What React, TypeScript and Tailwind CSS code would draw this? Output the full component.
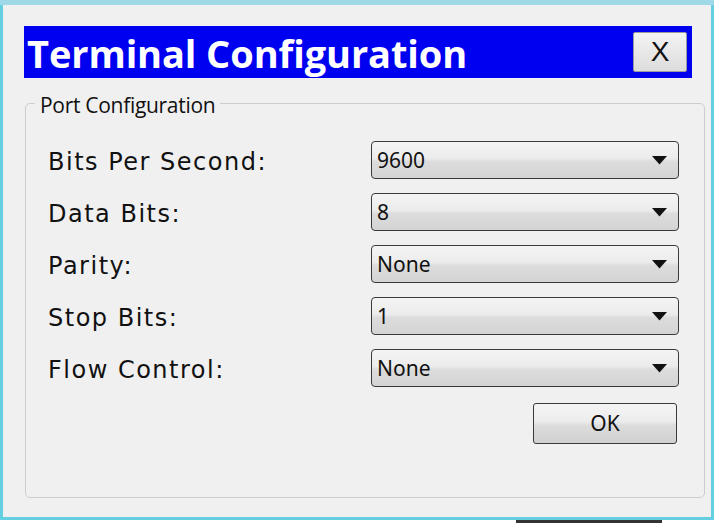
const rows = [
  { label: 'Bits Per Second:', value: '9600' },
  { label: 'Data Bits:', value: '8' },
  { label: 'Parity:', value: 'None' },
  { label: 'Stop Bits:', value: '1' },
  { label: 'Flow Control:', value: 'None' },
];

function Select({ value }: { value: string }) {
  return (
    <div className="flex h-[38px] w-[308px] items-center justify-between rounded-[4px] border border-[#3a3a3a] bg-[linear-gradient(to_bottom,#f4f4f4_0%,#ececec_45%,#dcdcdc_55%,#d4d4d4_100%)] pl-[5px] pr-[11px]">
      <span className="font-['Noto_Sans',sans-serif] text-[21px] leading-none text-[#111]">{value}</span>
      <svg width="15" height="9" viewBox="0 0 15 9">
        <polygon points="0,0 15,0 7.5,8.5" fill="#111" />
      </svg>
    </div>
  );
}

export default function App() {
  return (
    <div className="flex h-[526px] w-[714px] flex-col overflow-hidden bg-white">
      {/* bureau derrière */}
      <div className="h-[5px] shrink-0 bg-[#9fd8e6]" />

      {/* fenêtre */}
      <div className="flex h-[515px] shrink-0 flex-col border-x-[3px] border-b-[3px] border-[#63cfe0] bg-[#f0f0f0]">
        <div className="ml-[21px] mt-[21px] flex h-[52px] w-[668px] items-center justify-between bg-[#0000f0] pl-[3px] pr-[5px]">
          <span className="pt-[2px] font-['Open_Sans',sans-serif] text-[38px] font-bold leading-none tracking-[-0.1px] text-white">
            Terminal Configuration
          </span>
          <button className="flex h-[40px] w-[54px] items-center justify-center rounded-[2px] border border-[#9a9a9a] bg-[linear-gradient(to_bottom,#f4f4f4,#dcdcdc)] font-['Liberation_Sans',sans-serif] text-[28px] leading-none text-[#111]">
            X
          </button>
        </div>

        <fieldset className="mb-[19px] ml-[22px] mr-[6px] mt-[13px] flex-1 rounded-[5px] border border-[#cdcdcd] pb-0 pl-[22px] pr-[25px] pt-[25px]">
          <legend className="-ml-[13px] px-[5px] pt-[3px] font-['Open_Sans',sans-serif] text-[21px] leading-[22px] tracking-[-0.3px] text-[#111]">
            Port Configuration
          </legend>
          <div className="flex flex-col gap-[14px]">
            {rows.map((r) => (
              <div key={r.label} className="flex items-center justify-between">
                <span className="pt-[4px] font-['DejaVu_Sans',sans-serif] text-[24px] leading-none tracking-[1.5px] text-[#111]">
                  {r.label}
                </span>
                <Select value={r.value} />
              </div>
            ))}
          </div>
          <div className="mt-[16px] flex justify-end pr-[2px]">
            <button className="flex h-[41px] w-[144px] items-center justify-center rounded-[3px] border border-[#3a3a3a] bg-[linear-gradient(to_bottom,#f4f4f4_0%,#ececec_45%,#dcdcdc_55%,#d0d0d0_100%)] font-['Noto_Sans',sans-serif] text-[21px] leading-none text-[#111]">
              OK
            </button>
          </div>
        </fieldset>
      </div>

      <div className="flex h-[3px] justify-end pr-[52px]">
        <div className="h-[3px] w-[146px] bg-[#333]" />
      </div>
    </div>
  );
}
